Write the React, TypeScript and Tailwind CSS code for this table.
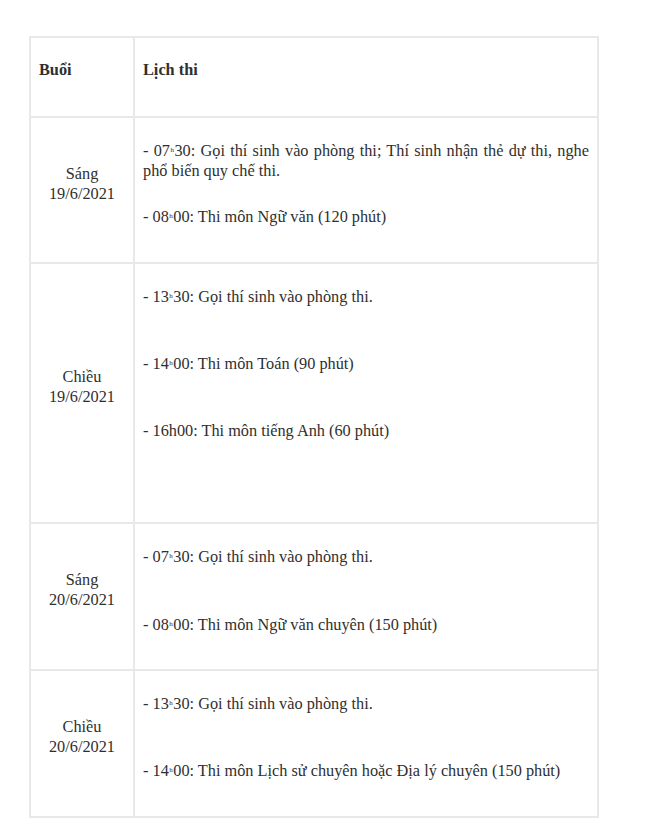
const H = () => <span className="mx-[0.5px] text-[7px] leading-none align-[4px]">h</span>;

type Row = { buoi: string; ngay: string; height: string; items: React.ReactNode[]; gap: string };

const rows: Row[] = [
  {
    buoi: "Sáng",
    ngay: "19/6/2021",
    height: "h-[146px]",
    gap: "mt-[26px]",
    items: [
      <>- 07<H />30: Gọi thí sinh vào phòng thi; Thí sinh nhận thẻ dự thi, nghe phổ biến quy chế thi.</>,
      <>- 08<H />00: Thi môn Ngữ văn (120 phút)</>,
    ],
  },
  {
    buoi: "Chiều",
    ngay: "19/6/2021",
    height: "h-[260px]",
    gap: "mt-[47px]",
    items: [
      <>- 13<H />30: Gọi thí sinh vào phòng thi.</>,
      <>- 14<H />00: Thi môn Toán (90 phút)</>,
      <>- 16h00: Thi môn tiếng Anh (60 phút)</>,
    ],
  },
  {
    buoi: "Sáng",
    ngay: "20/6/2021",
    height: "h-[147px]",
    gap: "mt-[48px]",
    items: [
      <>- 07<H />30: Gọi thí sinh vào phòng thi.</>,
      <>- 08<H />00: Thi môn Ngữ văn chuyên (150 phút)</>,
    ],
  },
  {
    buoi: "Chiều",
    ngay: "20/6/2021",
    height: "h-[147px]",
    gap: "mt-[47px]",
    items: [
      <>- 13<H />30: Gọi thí sinh vào phòng thi.</>,
      <>- 14<H />00: Thi môn Lịch sử chuyên hoặc Địa lý chuyên (150 phút)</>,
    ],
  },
];

export default function App() {
  return (
    <div className="min-h-[838px] bg-white pt-[36px] pl-[29px] [font-family:'Liberation_Serif',serif] text-[16.3px] leading-[20px] text-[#2f2f2f]">
      <table className="w-[570px] table-fixed border-collapse border-2 border-[#e4e4e4]">
        <colgroup>
          <col className="w-[104px]" />
          <col />
        </colgroup>
        <thead>
          <tr className="h-[80px]">
            <th className="border-2 border-[#e8e8e8] px-[8px] pb-[14px] text-left align-middle font-bold">Buổi</th>
            <th className="border-2 border-[#e8e8e8] px-[8px] pb-[14px] text-left align-middle font-bold">Lịch thi</th>
          </tr>
        </thead>
        <tbody>
          {rows.map((r, i) => (
            <tr key={i} className={r.height}>
              <td className="border-2 border-[#e8e8e8] px-[8px] pb-[13px] text-center align-middle">
                <p>{r.buoi}</p>
                <p>{r.ngay}</p>
              </td>
              <td className="border-2 border-[#e8e8e8] px-[8px] pt-[23px] align-top">
                {r.items.map((it, j) => (
                  <p key={j} className={`text-justify ${j > 0 ? r.gap : ""}`}>
                    {it}
                  </p>
                ))}
              </td>
            </tr>
          ))}
        </tbody>
      </table>
    </div>
  );
}
